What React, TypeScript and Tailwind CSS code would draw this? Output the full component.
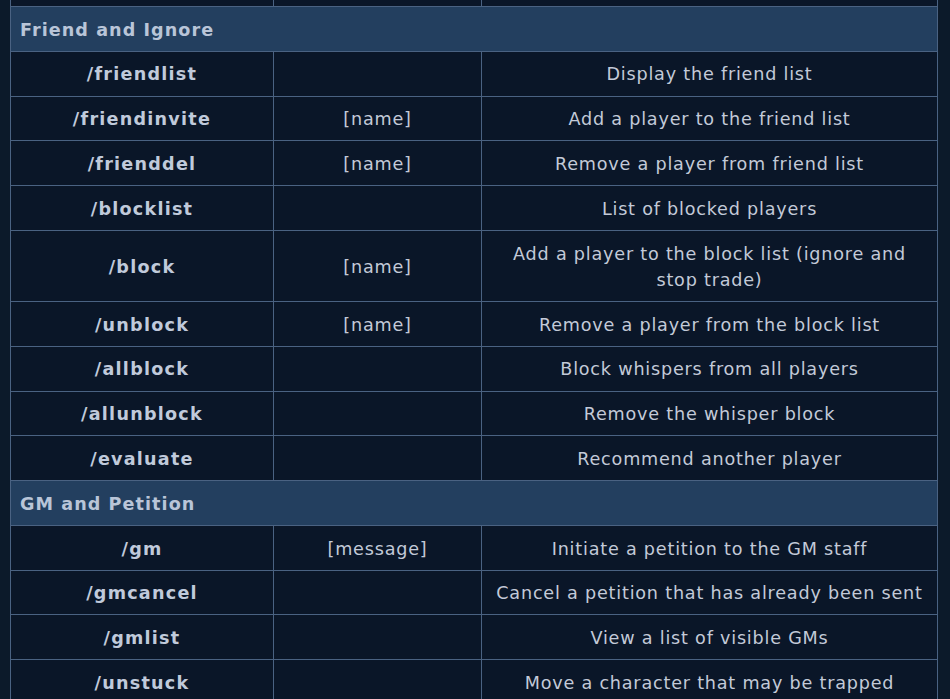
import React from "react"

interface Command {
  cmd: string
  args?: string
  desc: string
}

interface Section {
  title: string
  rows: Command[]
}

const sections: Section[] = [
  {
    title: "Friend and Ignore",
    rows: [
      { cmd: "/friendlist", desc: "Display the friend list" },
      { cmd: "/friendinvite", args: "[name]", desc: "Add a player to the friend list" },
      { cmd: "/frienddel", args: "[name]", desc: "Remove a player from friend list" },
      { cmd: "/blocklist", desc: "List of blocked players" },
      { cmd: "/block", args: "[name]", desc: "Add a player to the block list (ignore and stop trade)" },
      { cmd: "/unblock", args: "[name]", desc: "Remove a player from the block list" },
      { cmd: "/allblock", desc: "Block whispers from all players" },
      { cmd: "/allunblock", desc: "Remove the whisper block" },
      { cmd: "/evaluate", desc: "Recommend another player" },
    ],
  },
  {
    title: "GM and Petition",
    rows: [
      { cmd: "/gm", args: "[message]", desc: "Initiate a petition to the GM staff" },
      { cmd: "/gmcancel", desc: "Cancel a petition that has already been sent" },
      { cmd: "/gmlist", desc: "View a list of visible GMs" },
      { cmd: "/unstuck", desc: "Move a character that may be trapped" },
    ],
  },
]

const cell = "border border-[#4a6282] px-[10px] pt-[9.7px] pb-[7.7px] text-center align-middle"

export default function App() {
  return (
    <div className="min-h-[699px] bg-[#0c1a2a] pl-[10px] pr-[13px] overflow-hidden">
      <table
        className="w-[927px] border-collapse table-fixed text-[17.6px] leading-[1.5] tracking-[0.045em] text-[#c3cad8] -mt-[2px]"
        style={{ fontFamily: '"DejaVu Sans", Verdana, sans-serif' }}
      >
        <colgroup>
          <col className="w-[263px]" />
          <col className="w-[208px]" />
          <col className="w-[456px]" />
        </colgroup>
        <tbody>
          {/* tail of the previous row */}
          <tr className="bg-[#0a1628] h-[8px]">
            <td className="border border-[#4a6282] p-0" />
            <td className="border border-[#4a6282] p-0" />
            <td className="border border-[#4a6282] p-0" />
          </tr>
          {sections.map((section) => (
            <React.Fragment key={section.title}>
              <tr className="bg-[#233f5f]">
                <td colSpan={3} className="border border-[#4a6282] px-[9px] pt-[9.7px] pb-[7.7px] text-left font-bold tracking-[0.06em] text-[#b9c5d8]">
                  {section.title}
                </td>
              </tr>
              {section.rows.map((row) => (
                <tr key={row.cmd} className="bg-[#0a1628]">
                  <td className={`${cell} font-bold tracking-[0.07em] text-[#c0cadb]`}>{row.cmd}</td>
                  <td className={cell}>{row.args ?? ""}</td>
                  <td className={cell}>{row.desc}</td>
                </tr>
              ))}
            </React.Fragment>
          ))}
        </tbody>
      </table>
    </div>
  )
}
